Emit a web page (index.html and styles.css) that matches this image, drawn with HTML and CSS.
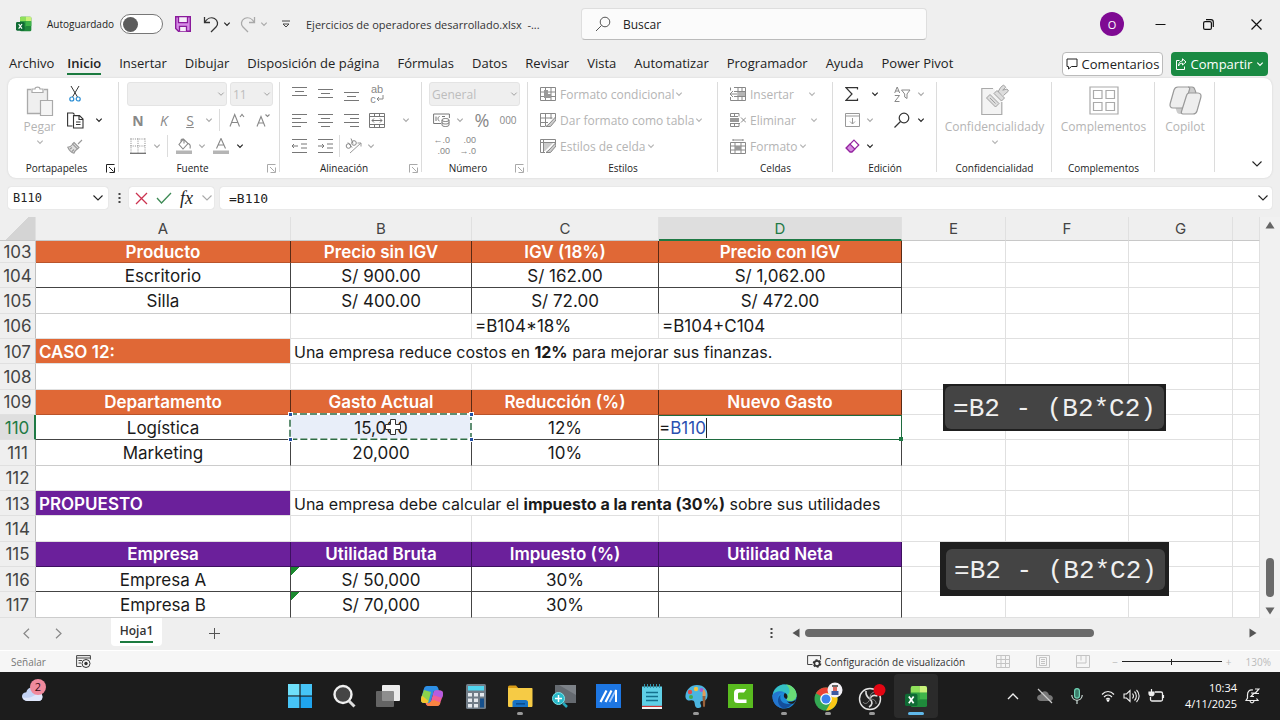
FILE: index.html
```html
<!DOCTYPE html>
<html lang="es">
<head>
<meta charset="utf-8">
<title>Ejercicios de operadores desarrollado.xlsx - Excel</title>
<meta name="viewport" content="width=device-width, initial-scale=1">
<link rel="stylesheet" href="styles.css">
</head>
<body>
<svg class="defs" aria-hidden="true">
  <symbol id="chev" viewBox="0 0 8 8"><path d="M1.3 2.6 4 5.3 6.7 2.6" fill="none" stroke="currentColor" stroke-width="1.2"/></symbol>
  <symbol id="chevl" viewBox="0 0 12 12"><path d="M1.5 3.500 6 8l4.500-4.500" fill="none" stroke="currentColor" stroke-width="1.100"/></symbol>
  <symbol id="launch" viewBox="0 0 9 9"><path d="M.5 8.500V.5H8.500M3 3l4.500 4.500M8.500 3.500v5H3.500" fill="none" stroke="currentColor"/></symbol>
  <symbol id="xl" viewBox="0 0 24 24"><path d="M8 1h13a2 2 0 0 1 2 2v18a2 2 0 0 1-2 2H8a2 2 0 0 1-2-2V3a2 2 0 0 1 2-2z" fill="#1f8a3b"/><path d="M6 8V3a2 2 0 0 1 2-2h7v7z" fill="#8fe05a"/><path d="M15 1h6a2 2 0 0 1 2 2v5h-8z" fill="#c9f27a"/><path d="M15 8h8v7h-8z" fill="#3fb54a"/><path d="M6 8h9v8H6z" fill="#2ea043"/><rect y="9" width="13" height="13" rx="2" fill="#0f6b34"/><path d="m4 12 5 7M9 12l-5 7" stroke="#fff" stroke-width="1.800"/></symbol>
</svg>

<header class="titlebar">
  <svg class="logo"><use href="#xl"/></svg>
  <label class="autosave">Autoguardado <input type="checkbox" role="switch" class="switch"></label>
  <button class="tb save" aria-label="Guardar"><svg width="16" height="16" viewBox="0 0 16 16"><path d="M.7.7h14.600v14.600H3.500L.7 12.500z" fill="#d58be6" stroke="#8a1a9b" stroke-width="1.400"/><path d="M3.500.7h9v6h-9zM4.500 15.300v-5h7v5" fill="#f5eef8" stroke="#8a1a9b" stroke-width="1.300"/></svg></button>
  <button class="tb undo" aria-label="Deshacer"><svg width="16" height="17" viewBox="0 0 16 17"><path d="M1.500 1v5.500H7M1.700 6.300C4 2.500 8 .8 11.500 2.500c3.500 2 4 6 1.500 8.500L8 16" fill="none" stroke="#333" stroke-width="1.300"/></svg></button>
  <button class="tb arrow" aria-label="Opciones de deshacer"><svg class="chev"><use href="#chev"/></svg></button>
  <button class="tb redo off" aria-label="Rehacer"><svg width="16" height="17" viewBox="0 0 16 17"><path d="M14.500 1v5.500H9M14.300 6.300C12 2.500 8 .8 4.500 2.500c-3.500 2-4 6-1.500 8.500L8 16" fill="none" stroke="#a9a9a9" stroke-width="1.300"/></svg></button>
  <button class="tb arrow off" aria-label="Opciones de rehacer"><svg class="chev"><use href="#chev"/></svg></button>
  <button class="tb custom" aria-label="Personalizar barra"><svg width="8" height="8" viewBox="0 0 8 8"><path d="M0 1h8M1 4l3 3 3-3z" fill="none" stroke="#444"/></svg></button>
  <span class="doc">Ejercicios de operadores desarrollado.xlsx &nbsp;-...</span>
  <label class="search"><svg width="16" height="16" viewBox="0 0 16 16"><circle cx="10" cy="6" r="4.800" fill="none" stroke="#555"/><path d="m6.500 9.500-5.500 5.500" stroke="#555"/></svg><input type="text" placeholder="Buscar" aria-label="Buscar"></label>
  <div class="winbtns">
    <button class="avatar" aria-label="Cuenta">O</button>
    <button aria-label="Minimizar"><svg width="11" height="11" viewBox="0 0 11 11"><path d="M.5 5.500h10" stroke="#111"/></svg></button>
    <button aria-label="Restaurar"><svg width="11" height="11" viewBox="0 0 11 11"><rect x=".6" y="2.600" width="7.800" height="7.800" rx="1.500" fill="none" stroke="#111" stroke-width="1.200"/><path d="M3 .7h5a2.300 2.300 0 0 1 2.300 2.300v5" fill="none" stroke="#111" stroke-width="1.200"/></svg></button>
    <button aria-label="Cerrar"><svg width="11" height="11" viewBox="0 0 11 11"><path d="m.5.5 10 10m0-10-10 10" stroke="#111" stroke-width="1.200"/></svg></button>
  </div>
</header>

<nav class="tabs">
  <button>Archivo</button><button class="on">Inicio</button><button>Insertar</button><button>Dibujar</button><button>Disposición de página</button><button>Fórmulas</button><button>Datos</button><button>Revisar</button><button>Vista</button><button>Automatizar</button><button>Programador</button><button>Ayuda</button><button>Power Pivot</button>
  <div class="share-area">
    <button class="comments"><svg width="12" height="12" viewBox="0 0 12 12"><path d="M1 1h10v7.500H5.500L2.500 11V8.500H1z" fill="none" stroke="#222"/></svg>Comentarios</button>
    <button class="share"><svg width="12" height="12" viewBox="0 0 12 12"><path d="M4.500 2.500h-3v9h8V8.500M7.500.8 11 4 7.500 7V5.200C5.500 5.200 4.300 6 3.500 8c.2-3.200 1.500-4.900 4-5.100z" fill="none" stroke="#fff"/></svg>Compartir<svg class="chev"><use href="#chev"/></svg></button>
  </div>
</nav>

<section class="ribbon">
  <div class="group">
    <div class="body clip">
      <button class="big off"><svg width="28" height="30" viewBox="0 0 28 30"><path d="M1.500 3.500h20v11H14v13H1.500z" fill="#efefef"/><path d="M5 3.500H1.500v24H14M18 3.500h3.500v11" fill="none" stroke="#aaa" stroke-width="1.300"/><path d="M6 6.500V3h3c0-2.500 5-2.500 5 0h3v3.500z" fill="#fff" stroke="#aaa" stroke-width="1.200"/><path d="M14.500 14.500h12v15h-12z" fill="#f5f5f5" stroke="#aaa" stroke-width="1.200"/></svg><span>Pegar</span><svg class="chev"><use href="#chev"/></svg></button>
      <div class="lines">
        <div class="line"><button class="ic" aria-label="Cortar"><svg width="12" height="16" viewBox="0 0 12 16"><path d="m2 0 6.500 11M10 0 3.500 11" stroke="#333" fill="none"/><circle cx="2.800" cy="13" r="2" fill="none" stroke="#2a8dd4" stroke-width="1.200"/><circle cx="9.200" cy="13" r="2" fill="none" stroke="#2a8dd4" stroke-width="1.200"/></svg></button></div>
        <div class="line"><button class="ic" aria-label="Copiar"><svg width="17" height="17" viewBox="0 0 17 17"><path d="M5.500 14H.6V1H6l1.500 1.500M6.500 3.600h6L16 7v9H6.500zM12 3.600V7.500h4M9 10h4.500M9 12.500h4.500" fill="none" stroke="#333" stroke-width="1.100"/></svg></button><button class="ar gap" aria-label="Más"><svg class="chev"><use href="#chev"/></svg></button></div>
        <div class="line"><button class="ic off" aria-label="Copiar formato"><svg width="16" height="15" viewBox="0 0 16 15"><path d="m15 1-4 4M7 3.500l5 5-1.500 1.500-5-5zM5.500 5.500C4 7.500 2.500 8 .8 8.200 2 11 4.500 13.500 7 14.200c.5-1.500 1.500-3 3.200-4.200M3 10l2-1.500M5 12.500l2-2" fill="#e0e0e0" stroke="#999" stroke-width="1.100"/></svg></button></div>
      </div>
    </div>
    <div class="label"><span>Portapapeles</span><svg class="launch"><use href="#launch"/></svg></div>
  </div>

  <div class="group">
    <div class="body lines">
      <div class="line sel"><select disabled class="font" aria-label="Fuente"><option></option></select><select disabled class="size" aria-label="Tamaño"><option>11</option></select></div>
      <div class="line off"><button class="ic bold">N</button><button class="ic ital">K</button><button class="ic under">S</button><button class="ar" aria-label="Más"><svg class="chev"><use href="#chev"/></svg></button><i class="sep"></i><button class="ic" aria-label="Aumentar"><svg width="16" height="14" viewBox="0 0 16 14"><path d="M1 13.500 5.700 1.500 10.500 13.500M2.500 9.500h6.500M11 4l2-2.500L15 4" fill="none" stroke="#888" stroke-width="1.100"/></svg></button><button class="ic" aria-label="Reducir"><svg width="14" height="14" viewBox="0 0 14 14"><path d="M1 13.500 5 3.500l4 10M2.500 10h5M9.500 1.500l2 2 2-2" fill="none" stroke="#888" stroke-width="1.100"/></svg></button></div>
      <div class="line off"><button class="ic" aria-label="Bordes"><svg width="16" height="16" viewBox="0 0 16 16"><path d="M.5 1h15M.5 8h15M1 .5v14M8 .5v14M15 .5v14" stroke="#888" stroke-dasharray="1 1.200"/><path d="M0 15.300h16" stroke="#666" stroke-width="1.200"/></svg></button><button class="ar" aria-label="Más"><svg class="chev"><use href="#chev"/></svg></button><i class="sep"></i><button class="ic fill" aria-label="Color de relleno"><svg width="16" height="16" viewBox="0 0 16 16"><path d="M7.500 1 3 6.500l4 4.500 5-5.500zM5 4.300V2.500C5 .5 8 .5 8 2.500v3M12.500 5.500c2 1 2 3 1.500 5" fill="none" stroke="#888" stroke-width="1.100"/><path d="M0 12.500h16v3.500H0z" fill="#b5b5b5"/></svg></button><button class="ar" aria-label="Más"><svg class="chev"><use href="#chev"/></svg></button><button class="ic" aria-label="Color de fuente"><svg width="16" height="16" viewBox="0 0 16 16"><path d="M3.500 10.500 8 .5l4.500 10M5.200 7h5.600" fill="none" stroke="#888" stroke-width="1.100"/><path d="M0 12.500h16v3.500H0z" fill="#b5b5b5"/></svg></button><button class="ar dark" aria-label="Más"><svg class="chev"><use href="#chev"/></svg></button></div>
    </div>
    <div class="label"><span>Fuente</span><svg class="launch off"><use href="#launch"/></svg></div>
  </div>

  <div class="group">
    <div class="body lines off">
      <div class="line"><button class="ic" aria-label="Arriba"><svg width="15" height="16" viewBox="0 0 15 16"><path d="M0 1.500h15M3 5.500h9M0 9.500h15" stroke="#777"/></svg></button><button class="ic" aria-label="Medio"><svg width="15" height="16" viewBox="0 0 15 16"><path d="M0 3.500h15M3 7.500h9M0 11.500h15" stroke="#777"/></svg></button><button class="ic" aria-label="Abajo"><svg width="15" height="16" viewBox="0 0 15 16"><path d="M0 6.500h15M3 10.500h9M0 14.500h15" stroke="#777"/></svg></button><button class="ic wrap" aria-label="Ajustar texto"><span>ab</span><span>c<svg width="8" height="8" viewBox="0 0 8 8"><path d="M7 1v4H1M3 3 1 5l2 2" fill="none" stroke="#888"/></svg></span></button></div>
      <div class="line"><button class="ic" aria-label="Izquierda"><svg width="15" height="14" viewBox="0 0 15 14"><path d="M0 1.500h15M0 5.500h9M0 9.500h15M0 13.500h9" stroke="#777"/></svg></button><button class="ic" aria-label="Centro"><svg width="15" height="14" viewBox="0 0 15 14"><path d="M0 1.500h15M3 5.500h9M0 9.500h15M3 13.500h9" stroke="#777"/></svg></button><button class="ic" aria-label="Derecha"><svg width="15" height="14" viewBox="0 0 15 14"><path d="M0 1.500h15M6 5.500h9M0 9.500h15M6 13.500h9" stroke="#777"/></svg></button><button class="ic" aria-label="Combinar"><svg width="16" height="15" viewBox="0 0 16 15"><path d="M.5.5h15v14H.5zM.5 3.500h15M.5 11.500h15M5.500.5v3M10.500.5v3M5.500 11.500v3M10.500 11.500v3M3 7.500h10M5 5.500l-2 2 2 2M11 5.500l2 2-2 2" fill="none" stroke="#777"/></svg></button><button class="ar gap2" aria-label="Más"><svg class="chev"><use href="#chev"/></svg></button></div>
      <div class="line"><button class="ic" aria-label="Disminuir sangría"><svg width="15" height="14" viewBox="0 0 15 14"><path d="M0 .5h15M9 5h6M9 9h6M0 13.500h15M0 7h6M2 5 0 7l2 2" fill="none" stroke="#777"/></svg></button><button class="ic" aria-label="Aumentar sangría"><svg width="15" height="14" viewBox="0 0 15 14"><path d="M0 .5h15M9 5h6M9 9h6M0 13.500h15M0 7h6M4 5l2 2-2 2" fill="none" stroke="#777"/></svg></button><i class="sep thin"></i><button class="ic fill" aria-label="Orientación"><svg width="17" height="16" viewBox="0 0 17 16"><path d="m5 15 11-10M12.500 5H16v3.500" fill="none" stroke="#999"/><circle cx="3.500" cy="8" r="2.300" fill="none" stroke="#888"/><circle cx="9" cy="5" r="2.300" fill="none" stroke="#888"/><path d="m3 4.500 4 5M6 .5l2 5" stroke="#888"/></svg></button><button class="ar" aria-label="Más"><svg class="chev"><use href="#chev"/></svg></button></div>
    </div>
    <div class="label"><span>Alineación</span><svg class="launch off"><use href="#launch"/></svg></div>
  </div>

  <div class="group">
    <div class="body lines off num">
      <div class="line sel"><select disabled class="gen" aria-label="Formato de número"><option>General</option></select></div>
      <div class="line"><button class="ic" aria-label="Moneda"><svg width="17" height="14" viewBox="0 0 17 14"><path d="M8 10.500H.6V1h15.800v4M3 3.500v4.500M6.500 3.500c-2 0-2 4.500 0 4.500M9 3.500h3" fill="none" stroke="#777"/><path d="M9 7v5c0 2 7 2 7 0V7c0-2-7-2-7 0zm0 0c0 2 7 2 7 0M9 9.500c0 2 7 2 7 0" fill="#fff" stroke="#777"/></svg></button><button class="ar" aria-label="Más"><svg class="chev"><use href="#chev"/></svg></button><button class="ic pct">%</button><button class="ic th">000</button></div>
      <div class="line"><button class="ic dec" aria-label="Aumentar decimales"><span>←.0</span><span>.00</span></button><button class="ic dec" aria-label="Disminuir decimales"><span>.00</span><span>→.0</span></button></div>
    </div>
    <div class="label"><span>Número</span><svg class="launch off"><use href="#launch"/></svg></div>
  </div>

  <div class="group">
    <div class="body lines off txt">
      <button class="line"><svg width="16" height="14" viewBox="0 0 16 14"><path d="M.5.5h15v13H.5zM.5 5h15M.5 9.500h15M5.500.5v13M11 .5v13" fill="none" stroke="#888"/><path d="M4 3h4v4h3v4H4z" fill="#999"/></svg><span>Formato condicional</span><svg class="chev"><use href="#chev"/></svg></button>
      <button class="line"><svg width="16" height="14" viewBox="0 0 16 14"><path d="M5 13.500H.5V.5h15v5M.5 5h12M.5 9.500H8M5.500.5v13M11 .5V6" fill="none" stroke="#888"/><path d="M15.500 4 9 11l-3 2.500h4.500L16 7z" fill="#ccc" stroke="#888"/></svg><span>Dar formato como tabla</span><svg class="chev"><use href="#chev"/></svg></button>
      <button class="line"><svg width="16" height="14" viewBox="0 0 16 14"><path d="M5 13.500H.5V.5h15v5M.5 3.500h15M3.500.5v13" fill="none" stroke="#888"/><path d="M4 4h9l-8 8H4z" fill="#ccc"/><path d="M15.500 4 9 11l-3 2.500h4.500L16 7z" fill="#ccc" stroke="#888"/></svg><span>Estilos de celda</span><svg class="chev"><use href="#chev"/></svg></button>
    </div>
    <div class="label"><span>Estilos</span></div>
  </div>

  <div class="group">
    <div class="body lines off txt">
      <button class="line"><svg width="16" height="14" viewBox="0 0 16 14"><path d="M4 .5h11.500v13H4M.5.5v3M.5 10v3.500H4M8 .5v13M12 .5v13M4 4.500h11.500M4 9.500h11.500M0 7h7M3 4 0 7l3 3" fill="none" stroke="#888"/><path d="M8 5h7v4H8z" fill="#b5b5b5"/></svg><span>Insertar</span><svg class="chev far"><use href="#chev"/></svg></button>
      <button class="line"><svg width="16" height="14" viewBox="0 0 16 14"><path d="M.5.5H9v3M.5 13.500H9v-3M4.500.5v3M4.500 10v3.500M0 3.500h8M0 10.500h10M.5.5v3M.5 10v3.500" fill="none" stroke="#888"/><path d="M0 5h9v4H0z" fill="#999"/><path d="m11 4.500 5 5m0-5-5 5" stroke="#888"/></svg><span>Eliminar</span><svg class="chev far"><use href="#chev"/></svg></button>
      <button class="line"><svg width="16" height="15" viewBox="0 0 16 15"><path d="M.5 3.500h15v11H.5zM.5 7h15M.5 11h15M5 3.500v11M11 3.500v11M3 0v2M13 0v2M3 1h10" fill="none" stroke="#888"/><path d="M5 7h6v4H5z" fill="#999"/></svg><span>Formato</span><svg class="chev"><use href="#chev"/></svg></button>
    </div>
    <div class="label"><span>Celdas</span></div>
  </div>

  <div class="group">
    <div class="body lines edit">
      <div class="line"><button class="ic" aria-label="Autosuma"><svg width="14" height="14" viewBox="0 0 14 14"><path d="M12.500 2.500V.7H1l6 6.300-6 6.300h11.500v-1.800" fill="none" stroke="#333" stroke-width="1.200"/></svg></button><button class="ar wide" aria-label="Más"><svg class="chev"><use href="#chev"/></svg></button><button class="ic off" aria-label="Ordenar y filtrar"><svg width="17" height="16" viewBox="0 0 17 16"><path d="m.7 7 2.500-6 2.500 6M1.500 5h3.500M.8 9.500h4.700l-4.700 6h4.700M7.500 4h8.500l-3 4v4.500l-2.300-1.500V8z" fill="none" stroke="#888"/></svg></button><button class="ar off" aria-label="Más"><svg class="chev"><use href="#chev"/></svg></button></div>
      <div class="line"><button class="ic off" aria-label="Rellenar"><svg width="15" height="14" viewBox="0 0 15 14"><path d="M.5.5h14v13H.5zM.5 3h14M7.500 5v6M5 8.500 7.500 11 10 8.500" fill="none" stroke="#999"/></svg></button><button class="ar off wide2" aria-label="Más"><svg class="chev"><use href="#chev"/></svg></button><button class="ic" aria-label="Buscar y seleccionar"><svg width="16" height="16" viewBox="0 0 16 16"><circle cx="10" cy="6" r="4.800" fill="none" stroke="#333" stroke-width="1.200"/><path d="m6.500 9.500-6 6" stroke="#333" stroke-width="1.200"/></svg></button><button class="ar" aria-label="Más"><svg class="chev"><use href="#chev"/></svg></button></div>
      <div class="line"><button class="ic" aria-label="Borrar"><svg width="15" height="14" viewBox="0 0 15 14"><path d="M9 1.200 13.800 6 7 12.800H5L1.200 9z" fill="#fff" stroke="#93239f" stroke-width="1.200"/><path d="M5 5.200 9.800 10 7 12.800H5L1.200 9z" fill="#d68be0" stroke="#93239f" stroke-width="1.200"/></svg></button><button class="ar wide2" aria-label="Más"><svg class="chev"><use href="#chev"/></svg></button></div>
    </div>
    <div class="label"><span>Edición</span></div>
  </div>

  <div class="group">
    <div class="body"><button class="big off"><svg width="28" height="32" viewBox="0 0 28 32"><path d="M.8 4.500h12l8 12v14H.8z" fill="#f3f3f3"/><path d="M12 4.500H.8v26h20V18" fill="none" stroke="#aaa" stroke-width="1.200"/><path d="m5.500 14 3.500-3.500 9 9-3.500 3.500zM9 14l5.500 5.500M13 9.500l3-3 7.500 7.500-3 3zM17 8l2.500-4.500 3-2.500 2.200 2.200-3 3L26 5l1.500 2-5 4.500" fill="#ddd" stroke="#a0a0a0"/></svg><span>Confidencialidady</span><svg class="chev"><use href="#chev"/></svg></button></div>
    <div class="label"><span>Confidencialidad</span></div>
  </div>
  <div class="group">
    <div class="body"><button class="big off"><svg width="30" height="32" viewBox="0 0 30 32"><path d="M1 3h28v27H1zM4.500 6.500h8.500v8H4.500zM17 6.500h8.500v8H17zM4.500 18.500h8.500v8H4.500zM17 18.500h8.500v8H17z" fill="none" stroke="#aaa" stroke-width="1.200"/></svg><span>Complementos</span></button></div>
    <div class="label"><span>Complementos</span></div>
  </div>
  <div class="group">
    <div class="body"><button class="big off"><svg width="33" height="32" viewBox="0 0 33 32"><path d="M8 3h14c2 0 3 1 3.500 3l1 3h-7z" fill="#ccc"/><path d="M25 30H11c-2 0-3-1-3.500-3l-1-3h7z" fill="#ccc"/><path d="M9 3h10c1.500 0 2 1 1.500 2.500l-5 16C15 23.500 14 24 12.500 24H4c-2.500 0-3.500-2-2.800-4.500L5 6c.6-2 2-3 4-3z" fill="#eee" stroke="#999" stroke-width="1.200"/><path d="M24 30H14c-1.500 0-2-1-1.500-2.500l5-16C18 9.500 19 9 20.500 9H29c2.500 0 3.500 2 2.800 4.500L28 27c-.6 2-2 3-4 3z" fill="#eee" stroke="#999" stroke-width="1.200"/><path d="M19 3h4c1.500 0 2.500 1 3 3l1 3" fill="none" stroke="#999" stroke-width="1.200"/></svg><span>Copilot</span></button></div>
  </div>
  <button class="collapse" aria-label="Contraer"><svg class="chevl"><use href="#chevl"/></svg></button>
</section>

<section class="fbar">
  <div class="box name"><input type="text" value="B110" aria-label="Cuadro de nombres"><svg class="chevl"><use href="#chevl"/></svg></div>
  <svg class="dots" width="3" height="12" viewBox="0 0 3 12"><path d="M.5 1h2v2h-2zM.5 5h2v2h-2zM.5 9h2v2h-2z" fill="#444"/></svg>
  <div class="box fx">
    <button aria-label="Cancelar"><svg width="13" height="13" viewBox="0 0 13 13"><path d="m1 1 11 11M12 1 1 12" stroke="#cc3350" stroke-width="1.300"/></svg></button>
    <button aria-label="Introducir"><svg width="16" height="12" viewBox="0 0 16 12"><path d="m1 6 4.500 5L15 1" fill="none" stroke="#3d8a55" stroke-width="1.300"/></svg></button>
    <button class="func" aria-label="Insertar función">fx</button>
    <svg class="chevl off"><use href="#chevl"/></svg>
  </div>
  <div class="box formula"><input type="text" value="=B110" aria-label="Barra de fórmulas"><svg class="chevl"><use href="#chevl"/></svg></div>
</section>

<main class="sheet">
  <table>
    <colgroup><col class="col-rh"><col class="col-a"><col class="col-b"><col class="col-c"><col class="col-d"><col class="col-e"><col class="col-f"><col class="col-g"><col></colgroup>
    <thead><tr><th class="corner"></th><th>A</th><th>B</th><th>C</th><th class="cur">D</th><th>E</th><th>F</th><th>G</th><th></th></tr></thead>
    <tbody>
      <tr class="cut orange"><th>103</th><td>Producto</td><td>Precio sin IGV</td><td>IGV (18%)</td><td>Precio con IGV</td><td></td><td></td><td></td><td></td></tr>
      <tr class="data"><th>104</th><td>Escritorio</td><td>S/ 900.00</td><td>S/ 162.00</td><td>S/ 1,062.00</td><td></td><td></td><td></td><td></td></tr>
      <tr class="data last"><th>105</th><td>Silla</td><td>S/ 400.00</td><td>S/ 72.00</td><td>S/ 472.00</td><td></td><td></td><td></td><td></td></tr>
      <tr class="left"><th>106</th><td></td><td></td><td>=B104*18%</td><td>=B104+C104</td><td></td><td></td><td></td><td></td></tr>
      <tr class="left"><th>107</th><td class="tag case">CASO 12:</td><td class="note" colspan="3">Una empresa reduce costos en <b>12%</b> para mejorar sus finanzas.</td><td></td><td></td><td></td><td></td></tr>
      <tr><th>108</th><td></td><td></td><td></td><td></td><td></td><td></td><td></td><td></td></tr>
      <tr class="orange"><th>109</th><td>Departamento</td><td>Gasto Actual</td><td>Reducción (%)</td><td>Nuevo Gasto</td><td></td><td></td><td></td><td></td></tr>
      <tr class="data"><th class="cur">110</th><td>Logística</td><td class="picked">15,000<svg class="marquee" aria-hidden="true"><rect width="100%" height="100%" fill="none" stroke="#fff" stroke-width="2"/><rect width="100%" height="100%" fill="none" stroke="#2c6b45" stroke-width="1.500" stroke-dasharray="7 3"/></svg><i class="h tl"></i><i class="h tr"></i><i class="h bl"></i><i class="h br"></i><svg class="cursor" width="18" height="18" viewBox="0 0 18 18" aria-hidden="true"><path d="M6.500 1.500h5v5h5v5h-5v5h-5v-5h-5v-5h5z" fill="#fff" stroke="#333"/></svg></td><td>12%</td><td class="editing">=<span>B110</span><i class="knob"></i></td><td></td><td></td><td></td><td></td></tr>
      <tr class="data last"><th>111</th><td>Marketing</td><td>20,000</td><td>10%</td><td></td><td></td><td></td><td></td><td></td></tr>
      <tr><th>112</th><td></td><td></td><td></td><td></td><td></td><td></td><td></td><td></td></tr>
      <tr class="left"><th>113</th><td class="tag task">PROPUESTO</td><td class="note" colspan="3">Una empresa debe calcular el <b>impuesto a la renta (30%)</b> sobre sus utilidades</td><td></td><td></td><td></td><td></td></tr>
      <tr><th>114</th><td></td><td></td><td></td><td></td><td></td><td></td><td></td><td></td></tr>
      <tr class="purple"><th>115</th><td>Empresa</td><td>Utilidad Bruta</td><td>Impuesto (%)</td><td>Utilidad Neta</td><td></td><td></td><td></td><td></td></tr>
      <tr class="data"><th>116</th><td>Empresa A</td><td class="warn">S/ 50,000</td><td>30%</td><td></td><td></td><td></td><td></td><td></td></tr>
      <tr class="data last"><th>117</th><td>Empresa B</td><td class="warn">S/ 70,000</td><td>30%</td><td></td><td></td><td></td><td></td><td></td></tr>
    </tbody>
  </table>
  <div class="vscroll"><svg width="10" height="8" viewBox="0 0 10 8"><path d="M5 .5 9.500 7.500H.5z" fill="#666"/></svg><i></i><svg width="10" height="8" viewBox="0 0 10 8"><path d="M5 7.500.5.5h9z" fill="#666"/></svg></div>
  <div class="snip one"><code>=B2 - (B2*C2)</code></div>
  <div class="snip two"><code>=B2 - (B2*C2)</code></div>
</main>

<div class="sheetbar">
  <button aria-label="Anterior"><svg width="7" height="11" viewBox="0 0 7 11"><path d="M6 .8 1 5.500l5 4.700" fill="none" stroke="#888" stroke-width="1.200"/></svg></button>
  <button aria-label="Siguiente"><svg width="7" height="11" viewBox="0 0 7 11"><path d="m1 .8 5 4.700-5 4.700" fill="none" stroke="#888" stroke-width="1.200"/></svg></button>
  <button class="tab"><span>Hoja1</span></button>
  <button class="add" aria-label="Nueva hoja"><svg width="11" height="11" viewBox="0 0 11 11"><path d="M5.500 0v11M0 5.500h11" stroke="#555"/></svg></button>
  <div class="hscroll"><svg width="3" height="12" viewBox="0 0 3 12"><path d="M.5 1h2v2h-2zM.5 5h2v2h-2zM.5 9h2v2h-2z" fill="#444"/></svg><svg class="la" width="8" height="10" viewBox="0 0 8 10"><path d="M.5 5 7.500.5v9z" fill="#555"/></svg><div class="track"><i></i></div><svg width="8" height="10" viewBox="0 0 8 10"><path d="M7.500 5 .5.5v9z" fill="#555"/></svg></div>
</div>

<div class="status">
  <span class="mode">Señalar</span>
  <svg class="rec" width="15" height="13" viewBox="0 0 15 13"><path d="M5.500 11.500H.6V.6h13.800v4M.6 3h13.800M2.500 5.500H6M2.500 8H5" fill="none" stroke="#444"/><circle cx="10" cy="8.500" r="4" fill="#f6f6f6" stroke="#333"/><circle cx="10" cy="8.500" r="1.700" fill="#333"/></svg>
  <button class="view"><svg width="15" height="13" viewBox="0 0 15 13"><path d="M5.500 9.500H.6V.6h13v4" fill="none" stroke="#444"/><circle cx="10" cy="8.500" r="2.600" fill="none" stroke="#333" stroke-width="1.600"/><circle cx="10" cy="8.500" r="3.700" fill="none" stroke="#333" stroke-width="1.200" stroke-dasharray="2 1.870"/></svg>Configuración de visualización</button>
  <button class="v" aria-label="Normal"><svg width="14" height="13" viewBox="0 0 14 13"><path d="M.5.5h13v12H.5zM.5 4.500h13M.5 8.500h13M5 .5v12M9.500.5v12" fill="none" stroke="#c4c4c4"/></svg></button>
  <button class="v" aria-label="Diseño de página"><svg width="14" height="13" viewBox="0 0 14 13"><path d="M.5.5h13v12H.5zM3.500 2.500h7v8h-7zM5 4.500h4M5 6.500h4M5 8.500h4" fill="none" stroke="#c4c4c4"/></svg></button>
  <button class="v" aria-label="Salto de página"><svg width="14" height="13" viewBox="0 0 14 13"><path d="M.5.5h13v12H.5zM.5 8h9.500V.5M5 .5v5" fill="none" stroke="#c4c4c4"/></svg></button>
  <div class="zoom"><span>−</span><input type="range" min="10" max="400" value="205" disabled aria-label="Zoom"><span>+</span></div>
  <span class="pctz">130%</span>
</div>

<footer class="taskbar">
  <button class="weather" aria-label="El tiempo"><svg width="27" height="24" viewBox="0 0 30 26"><path d="M8 24C1 24 0 15 7 14.500 8 8 17 7 19 14c7-.5 8 9.500 2 10z" fill="#c3d3f5"/><path d="M8 24c-3 0-5-2-5-4 6 2 14-1 16-6 7-.5 8 9.500 2 10z" fill="#dfe7fb"/></svg><span>2</span></button>
  <div class="apps">
    <button aria-label="Inicio"><svg width="24" height="24" viewBox="0 0 24 24"><path d="M0 0h11.400v11.400H0z" fill="#6fe0fa"/><path d="M12.600 0H24v11.400H12.600zM0 12.600h11.400V24H0z" fill="#46c4f7"/><path d="M12.600 12.600H24V24H12.600z" fill="#1fa4ee"/></svg></button>
    <button aria-label="Buscar"><svg width="24" height="24" viewBox="0 0 24 24"><circle cx="11" cy="10.500" r="8.500" fill="#454545" stroke="#f0f0f0" stroke-width="2.400"/><path d="m17 17 5.500 5.500" stroke="#ddd" stroke-width="3"/></svg></button>
    <button aria-label="Vista de tareas"><svg width="26" height="24" viewBox="0 0 26 24"><rect x="7" y="1" width="18" height="16" rx="1" fill="#ececec"/><rect x="1" y="7" width="18" height="16" rx="1" fill="#777" opacity=".8"/></svg></button>
    <button aria-label="Copilot"><svg width="24" height="24" viewBox="0 0 24 24"><path d="M7 2h9c1 0 2 1 2.500 3l.5 2h-5l-3 10c-.5 1.500-1 2-2.500 2H4c-3 0-3.500-3-2.500-6l2.300-8C4.300 3 5.500 2 7 2z" fill="#2d8fe5"/><path d="M4 6 11 8 8.500 17.500c-.3 1-1 1.500-2 1.500H4c-3 0-3.500-3-2.500-6z" fill="#8bd34c"/><path d="M2 11.500 8.500 17C8 18.500 7.500 19 6.500 19H4c-3 0-3.500-3-2.500-6z" fill="#f5c52e"/><path d="M17 22H9c-2 0-3-1-3.500-3h3.500c1 0 1.700-.6 2-2l2.500-8.500c.4-1.300 1-2 2.500-2h4c3 0 3.500 3 2.500 6L20.200 19c-.5 2-1.700 3-3.200 3z" fill="#ef5f97"/><path d="M14 7.500c.4-.7 1-1 2-1h4c3 0 3.500 3 2.500 6L22 14l-9-3z" fill="#b65be0"/><path d="M6 19.500C9 20 12 16 14 16l6.500 2.500C20 21 18.500 22 17 22H9c-1.500 0-2.500-.8-3-2.500z" fill="#f98442"/></svg></button>
    <button aria-label="Calculadora"><svg width="20" height="25" viewBox="0 0 20 25"><rect width="20" height="25" rx="1.500" fill="#717d88"/><path d="M2 2h16v4.500H2z" fill="#50d5ef"/><path d="M2 9h4v3.500H2zM8 9h4v3.500H8zM14 9h4v3.500h-4zM2 14.500h4V18H2zM8 14.500h4V18H8zM2 20h4v3.500H2zM8 20h4v3.500H8z" fill="#e4e9ee"/><path d="M14 14.500h4v9h-4z" fill="#15508d"/></svg></button>
    <button class="run" aria-label="Explorador"><svg width="26" height="24" viewBox="0 0 26 24"><path d="M1 3a1.500 1.500 0 0 1 1.500-1.500H9L12 5H1z" fill="#d99c16"/><path d="M1 4h23.500c.8 0 1 .5 1 1v16.500c0 1-.5 1.500-1.500 1.500H2.500C1.500 23 1 22.500 1 21.500z" fill="#f6cb45"/><path d="M5.500 23v-4.500c0-1.500.8-2.500 2.500-2.500h10.500c1.700 0 2.500 1 2.500 2.500V23z" fill="#1772c4"/><path d="M9 19h9v1.600H9z" fill="#0a4d8f"/></svg></button>
    <button aria-label="Lupa"><svg width="26" height="24" viewBox="0 0 26 24"><path d="M4 1h21v18H4z" fill="#656a70"/><path d="M8 1h17v10z" fill="#7d8288"/><circle cx="7.500" cy="14.500" r="6" fill="#29b9c9" stroke="#7de3ea"/><path d="M7.500 11v7M4 14.500h7" stroke="#fff" stroke-width="1.500"/><path d="m12 19 4 4" stroke="#27a8bb" stroke-width="2.500"/></svg></button>
    <button aria-label="MyASUS"><svg width="25" height="24" viewBox="0 0 25 24"><path d="M0 0h25v24H0z" fill="#1d76e2"/><path d="m4.500 18 6-11.500M9.500 18l6-11.500" stroke="#fff" stroke-width="2.200"/><path d="m13.500 18 6.500-12v12" fill="none" stroke="#9dc8ff" stroke-width="1.800"/><path d="M20 6v12" stroke="#fff" stroke-width="2"/></svg></button>
    <button aria-label="Bloc de notas"><svg width="20" height="25" viewBox="0 0 20 25"><path d="M0 2.500h20V22H0z" fill="#5fcfe6"/><path d="M0 22h20v3H0z" fill="#f4f4f4"/><path d="M0 21.800h20v1.200H0z" fill="#c33"/><path d="M4 8.500h12M4 12.500h12M4 16.500h12" stroke="#13708e" stroke-width="1.500"/><path d="M2.500 0v4M5.500 0v4M8.500 0v4M11.500 0v4M14.500 0v4M17.500 0v4" stroke="#2f94ac"/></svg></button>
    <button class="run" aria-label="Paint"><svg width="25" height="25" viewBox="0 0 25 25"><path d="M13 1c7 0 10.500 4.500 10.500 10 0 4-2 6-5 6-2 0-3 1.500-1.500 4 1 2-1 3.500-3.500 3-2.500-.4-2.500-3-3-5.500-.4-2-2-2.500-4.500-2S1 15 1.500 11.500C2 6 6.500 1 13 1z" fill="#4bb5e0"/><circle cx="12" cy="5" r="2.200" fill="#f3c33f"/><circle cx="6" cy="8" r="2.200" fill="#e04d4d"/><circle cx="17.500" cy="6" r="2" fill="#a55bd0"/><circle cx="7" cy="13" r="2" fill="#46a94d"/><path d="M19.500 5c2 2 2.500 4 2 7h-3c0-3 0-5 1-7z" fill="#e39b58"/><path d="M18.500 12h3l-.5 10c-.3 1.500-1.700 1.500-2 0z" fill="#98613a"/></svg></button>
    <button aria-label="Camtasia"><svg width="25" height="24" viewBox="0 0 25 24"><path d="M0 0h25v24H0z" fill="#59bb1f"/><path d="M18.500 5H10a4 4 0 0 0-4 4v6.500a3.500 3.500 0 0 0 3.500 3.500h9v-3.500h-7c-1 0-1.500-.5-1.500-1.500V10c0-1 .7-1.500 1.500-1.500h4.500z" fill="#fff"/></svg></button>
    <button class="run" aria-label="Edge"><svg width="25" height="25" viewBox="0 0 25 25"><circle cx="12.500" cy="12.500" r="12" fill="#1e8ad8"/><path d="M1 10C3 3 8 .5 12.500.5c7 0 12 5 12 10.500 0 4-3 6-6 6-2.500 0-4-1-4-2 1.500-1.500 1.500-6-3-7C7 7 2 9 .5 13z" fill="#35c1c4"/><path d="M14 .6C20.500 1 24.500 6 24.500 11c0 4-3 6-6 6-2.500 0-4-1-4-2 1-1 1.300-2.500.7-4C19 9 18 4 14 .6z" fill="#69db76"/><path d="M8 9c-5 5-2 13 4 15.500C4 24-.5 17 .7 11 3 7 8 6.500 11.500 8z" fill="#2475cf"/><path d="M8.500 11c-1.500 6 3 10.500 12 8.500-3 4-7 5-9.500 4.800C5 21 4.500 14 8.500 11z" fill="#144f9c"/><path d="M14.500 15c-3.500-1-3-5-1.500-6 3 1.500 3 4.500 1.500 6z" fill="#1c1c1c"/><path d="M15 17c2 1.500 6 1 9-1.500-.5 2-1.500 3.300-3 4.300-3 0-5-.8-6-2.800z" fill="#1c1c1c"/></svg></button>
    <button class="run" aria-label="Chrome"><svg width="29" height="29" viewBox="0 0 29 29"><circle cx="12" cy="17" r="11.500" fill="#34a853"/><path d="M12 17 2 11.300A11.500 11.500 0 0 1 22 11.300H12z" fill="#ea4335"/><path d="M22 11.300A11.500 11.500 0 0 1 12 28.500l5-8.600-5-8.600z" fill="#fbc816"/><circle cx="12" cy="17" r="5.800" fill="#fff"/><circle cx="12" cy="17" r="4.500" fill="#3b82ee"/><circle cx="21" cy="8" r="7.500" fill="#f3f1f6"/><path d="M17.500 9h7v4h-7z" fill="#3f5aa0"/><path d="M19 4h4v5h-4z" fill="#d9685f"/><path d="M18 3h6v2h-6z" fill="#666"/></svg></button>
    <button class="run" aria-label="OBS"><svg width="28" height="29" viewBox="0 0 28 29"><circle cx="12" cy="17" r="10.500" fill="#222" stroke="#e5e5e5" stroke-width="1.400"/><path d="M8 9c-.5 4 1 6 4 8M19.500 14c-4-1.500-6.500 0-7.500 3M11 25c3.500-2 4-5 1-8" fill="none" stroke="#ddd" stroke-width="1.600"/><path d="M5 20c1.500 2.500 5 2 7-3M16 10c-3 1-4.500 4-4 7M18 22c.5-3-2-5-6-5" fill="none" stroke="#888"/><circle cx="21.500" cy="8" r="6" fill="#e30613"/></svg></button>
    <button class="run active" aria-label="Excel"><svg width="23" height="23"><use href="#xl"/></svg></button>
  </div>
  <div class="tray">
    <svg width="12" height="7" viewBox="0 0 12 7"><path d="m1 6 5-5 5 5" fill="none" stroke="#eee" stroke-width="1.400"/></svg>
    <svg width="18" height="16" viewBox="0 0 18 16"><path d="M5 13c-5 0-5-6-.5-6.500C6 2 12 2 13 7c5 0 5 6 1 6z" fill="#777"/><path d="m2 1 14 14" stroke="#ccc" stroke-width="1.200"/></svg>
    <svg width="12" height="16" viewBox="0 0 12 16"><rect x="3.600" y=".6" width="4.800" height="9.500" rx="2.400" fill="#3c7d6b" stroke="#6fd3b5" stroke-width="1.200"/><path d="M.8 7c0 7 10.400 7 10.400 0M6 12.500V16" fill="none" stroke="#dfeee9" stroke-width="1.100"/></svg>
    <svg class="w" width="14" height="12" viewBox="0 0 14 12"><path d="M1 4.500c3.500-4 8.500-4 12 0M3 7c2.500-2.700 5.500-2.700 8 0M5 9.300c1.300-1.300 2.700-1.300 4 0" fill="none" stroke="#eee" stroke-width="1.200"/><circle cx="7" cy="10.500" r="1.300" fill="#fff"/></svg>
    <svg width="17" height="14" viewBox="0 0 17 14"><path d="M1 5h2.500L7 1.500v11L3.500 9H1zM9.500 4.500c1.200 1.500 1.200 3.500 0 5M11.500 2.500c2.500 2.500 2.500 6.500 0 9M13.500 1c3.500 3.500 3.500 8.500 0 12" fill="none" stroke="#eee" stroke-width="1.100"/></svg>
    <svg width="17" height="14" viewBox="0 0 17 14"><path d="M7 3h6a1.500 1.500 0 0 1 1.500 1.500v6A1.500 1.500 0 0 1 13 12H4a1.500 1.500 0 0 1-1.500-1.500V8" fill="none" stroke="#eee" stroke-width="1.300"/><path d="M15.500 6v3M3.500 0v3M1 3h5v1.500c0 3-5 3-5 0z" stroke="#eee" stroke-width="1.200" fill="#eee"/></svg>
    <div class="clock"><span>10:34</span><span>4/11/2025</span></div>
    <svg width="15" height="16" viewBox="0 0 15 16"><path d="M8 2C4 1.500 2.500 4 2.500 7v3L1 12.500h12L11.500 10.500M5 13c.5 2.500 3.500 2.500 4 0" fill="none" stroke="#eee" stroke-width="1.200"/><path d="M10 1h4l-4 4.500h4M6 5h3L6 8.500h3" fill="none" stroke="#eee" stroke-width="1.200"/></svg>
  </div>
</footer>
</body>
</html>
```
FILE: styles.css
```css
* { box-sizing: border-box; }
body {
  margin: 0;
  min-height: 100vh;
  display: flex;
  flex-direction: column;
  background: #efefef;
  color: #222;
  font-family: "Open Sans", "Noto Sans", sans-serif;
  font-size: 12px;
}
button, input, select { font: inherit; color: inherit; }
button { border: 0; padding: 0; background: none; display: flex; align-items: center; justify-content: center; white-space: nowrap; flex: none; }
svg { flex: none; display: block; }
.defs { width: 0; height: 0; position: absolute; }
.chev { width: 8px; height: 8px; }
.chevl { width: 12px; height: 12px; }
.off { color: #a9a9a9; }

/* Title bar */
.titlebar { height: 48px; display: flex; align-items: center; padding-left: 16px; }
.logo { width: 16px; height: 16px; margin-right: 15px; }
.autosave { display: flex; align-items: center; justify-content: space-between; width: 116px; font-size: 10px; margin-right: 11px; white-space: nowrap; }
.switch { appearance: none; margin: 0; width: 43px; height: 20px; border: 1px solid #777; border-radius: 10px; background: #fff; display: flex; align-items: center; padding: 0 2px; }
.switch::before { content: ""; width: 15px; height: 15px; border-radius: 50%; background: #5c5c5c; }
.tb { height: 24px; }
.save { width: 18px; margin-right: 11px; }
.undo, .redo { width: 16px; }
.redo { margin-left: 6px; }
.arrow { width: 15px; }
.custom { width: 22px; margin: 0 9px 0 4px; }
.doc { flex: none; width: 275px; white-space: nowrap; color: #333; font-size: 11px; }
.search { flex: 1; max-width: 346px; height: 32px; display: flex; align-items: center; gap: 12px; padding: 0 13px; background: #fbfbfb; border: 1px solid #dedede; border-bottom-color: #bbb; border-radius: 4px; }
.search input { flex: 1; min-width: 0; border: 0; padding: 0; background: none; outline: 0; }
.search input::placeholder { color: #222; opacity: 1; }
.winbtns { margin-left: auto; display: flex; align-items: center; }
.winbtns button { width: 48px; height: 32px; }
.winbtns .avatar { width: 24px; height: 24px; margin-right: 12px; border-radius: 50%; background: #7f0a93; color: #fff; font-size: 11px; }

/* Ribbon tabs */
.tabs { height: 30px; display: flex; align-items: center; gap: 18px; padding: 1px 12px 0 9px; font-size: 13px; }
.tabs > button { height: 22px; border-bottom: 2px solid transparent; }
.tabs > .on { font-weight: 600; border-color: #1b7a3f; margin: 0 0 0 -5px; }
.share-area { margin-left: auto; display: flex; gap: 8px; font-size: 12px; }
.share-area button { height: 24px; border-radius: 4px; gap: 4px; font-size: 13px; }
.comments { width: 101px; background: #fff; border: 1px solid #bbb; }
.share { width: 97px; background: #1a8a43; color: #fff; }

/* Ribbon */
.ribbon { margin: 0 8px; height: 100px; background: #fff; border-radius: 8px; box-shadow: 0 0 2px #ccc; display: grid; grid-template-columns: 111px 161px 142px 106px 190px 115px 104px 115px 103px 60px 1fr; }
.group { display: flex; flex-direction: column; padding: 3px 0 0; position: relative; }
.group::after { content: ""; position: absolute; right: 0; top: 4px; bottom: 6px; width: 1px; background: #dcdcdc; }
.body { height: 78px; }
.lines { display: flex; flex-direction: column; padding-left: 6px; }
.line { height: 26px; display: flex; align-items: center; }
.ic { width: 26px; height: 24px; }
.ar { width: 12px; height: 24px; }
.ic.fill { width: 24px; }
.gap { margin-left: 5px; }
.gap2 { margin-left: 10px; }
.dark, .edit { color: #222; }
.sep { width: 1px; height: 22px; background: #dcdcdc; margin: 0 4px; flex: none; }
.sep.thin { margin: 0 1px; }
.label { display: flex; align-items: center; justify-content: center; height: 18px; font-size: 10px; padding: 0 18px 0 4px; position: relative; }
.group:nth-child(n+5) .label { padding: 0; }
.launch { width: 9px; height: 9px; position: absolute; right: 4px; top: 5px; }
.clip { display: flex; }
.clip .big { width: 63px; padding-top: 5px; }
.clip .lines { margin-left: -9px; padding-left: 0; }
.big { width: 100%; flex-direction: column; justify-content: flex-start; height: 78px; padding-top: 3px; font-size: 12px; }
.big span { line-height: 22px; }
.big.off, .txt { color: #b4b4b4; }
.bold { font-weight: 700; font-size: 14px; color: #888; }
.ital { font-style: italic; font-size: 14px; color: #888; }
.under { text-decoration: underline; font-size: 14px; color: #888; }
.sel { gap: 3px; padding-left: 2px; }
select { appearance: none; height: 24px; border: 1px solid #e4e4e4; border-radius: 3px; background: #efefef url("data:image/svg+xml,%3Csvg xmlns='http://www.w3.org/2000/svg' width='8' height='8'%3E%3Cpath d='M1.3 2.6 4 5.3 6.700 2.600' fill='none' stroke='%23a0a0a0'/%3E%3C/svg%3E") no-repeat right 1px center; padding: 0 2px; color: #bdbdbd; opacity: 1; }
.font { width: 100px; }
.size { width: 43px; }
.gen { width: 91px; }
.num .sel { padding-left: 1px; }
.wrap { flex-direction: column; font: 11px/10px "Liberation Sans", sans-serif; color: #888; }
.wrap span { display: flex; }
.pct { font-size: 18px; color: #888; margin-left: 3px; }
.th { font-size: 10px; color: #888; }
.dec { flex-direction: column; align-items: flex-end; padding-right: 4px; font: 9px/11px "Liberation Sans", sans-serif; color: #888; }
.txt { padding-left: 12px; }
.txt .line { justify-content: flex-start; gap: 4px; }
.txt .chev { margin-left: -3px; }
.txt .far { margin-left: 10px; }
.wide { width: 20px; margin-right: 4px; }
.wide2 { width: 9px; margin-right: 15px; }
.collapse { justify-self: end; align-self: end; width: 30px; height: 28px; }

/* Formula bar */
.fbar { display: flex; align-items: stretch; height: 22px; margin: 9px 8px 8px; font-family: "DejaVu Sans Mono", monospace; font-size: 12px; }
.box { display: flex; align-items: center; background: #fff; border-radius: 3px; box-shadow: 0 0 1px #bbb; }
.box input { border: 0; padding: 0; background: none; outline: 0; flex: 1; min-width: 0; }
.name { width: 100px; padding: 0 4px 0 5px; }
.dots { align-self: center; margin: 0 8px 0 10px; }
.fx { width: 85px; justify-content: space-between; padding: 0 1px 0 6px; margin-right: 6px; }
.func { font: italic 18px "Liberation Serif", serif; }
.formula { flex: 1; padding: 0 3px 0 9px; font-size: 13px; }

/* Grid */
.sheet { flex: 1; display: flex; position: relative; overflow: hidden; }
table { flex: 1; width: 0; height: 401px; min-height: 100%; table-layout: fixed; border-collapse: separate; border-spacing: 0; background: #fff; color: #1a1a1a; font-family: Inter, sans-serif; font-size: 17px; }
.col-rh { width: 36px; }
.col-a { width: 255px; }
.col-b { width: 181px; }
.col-c { width: 187px; }
.col-d { width: 243px; }
.col-e { width: 104px; }
.col-f { width: 123px; }
.col-g { width: 104px; }
th, td { padding: 1px 0 0; line-height: 20px; white-space: nowrap; overflow: hidden; text-align: center; border-right: 1px solid #e0e0e0; border-bottom: 1px solid #e0e0e0; }
th { font-weight: 400; background: #efefef; color: #444; }
thead th { height: 24px; font-size: 15px; border-bottom-color: #c8c8c8; }
tbody th { border-right-color: #c0c0c0; }
thead .cur { background: #dedede; color: #1f7a45; border-bottom: 2px solid #1f7a45; }
tbody .cur { background: #dedede; color: #1f7a45; border-right: 2px solid #1f7a45; }
.corner { background: linear-gradient(135deg, #efefef 50%, #d4d4d4 50%); }
.cut > * { height: 22px; padding: 0; }
.orange td:nth-child(-n+5), .purple td:nth-child(-n+5) { background: #e06836; color: #fff; font-weight: 600; border-right-color: #5a2a14; border-bottom-color: #b9542b; }
.purple td:nth-child(-n+5) { background: #6b209b; border-color: #3d1060; }
.data td:nth-child(-n+5) { border-color: #444; }
.data.last td:nth-child(-n+5) { border-bottom-color: #ccc; }
.left td { text-align: left; padding-left: 3px; }
.note { font-size: 16px; }
.tag { color: #fff; font-weight: 600; }
.case { background: #e06836; }
.task { background: #6b209b; }
b { font-weight: 700; }
.data .picked { background: #e8eef9; position: relative; overflow: visible; }
.marquee { position: absolute; left: -1px; top: -1px; width: calc(100% + 1px); height: calc(100% + 1px); overflow: visible; }
.h { position: absolute; width: 5px; height: 5px; background: #2450a4; border: 1px solid #fff; }
.tl { left: -3px; top: -3px; }
.tr { right: -3px; top: -3px; }
.bl { left: -3px; bottom: -3px; }
.br { right: -3px; bottom: -3px; }
.cursor { position: absolute; left: 93px; top: 3px; }
.data .editing { text-align: left; position: relative; overflow: visible; }
.data td.editing:nth-child(-n+5) { border-color: #1f6b3f; box-shadow: inset 0 1px #1f6b3f; }
.editing span { color: #2a4fb0; border-right: 1px solid #222; }
.knob { position: absolute; right: -2px; bottom: -2px; width: 4px; height: 4px; background: #1f7a45; }
.warn { background: linear-gradient(135deg, #1b8a2f 6px, transparent 6px); }
.vscroll { width: 20px; display: flex; flex-direction: column; align-items: center; padding: 4px 0 3px; background: #f1f1f1; }
.vscroll i { width: 8px; height: 39px; border-radius: 4px; background: #6b6b6b; margin: auto 0 10px; }
.snip { position: absolute; display: flex; background: #1f1f1f; color: #f0f0f0; }
.snip code { flex: 1; display: flex; align-items: center; justify-content: center; padding-top: 2px; background: #444; border-radius: 6px; font-family: "Liberation Mono", monospace; font-size: 26px; white-space: pre; }
.one { left: 943px; top: 167px; width: 223px; height: 47px; padding: 2px; }
.two { left: 940px; top: 325px; width: 229px; height: 54px; padding: 7px 4px 6px 6px; }

/* Sheet tabs */
.sheetbar { height: 32px; display: flex; align-items: flex-start; padding-left: 10px; }
.sheetbar button { width: 32px; height: 30px; }
.sheetbar .tab { width: 51px; height: 28px; margin-left: 37px; background: #fff; border-radius: 0 0 4px 4px; font-weight: 600; color: #333; }
.tab span { border-bottom: 2px solid #1b7a3f; line-height: 20px; }
.sheetbar .add { margin-left: 36px; }
.hscroll { margin-left: auto; width: 510px; height: 30px; display: flex; align-items: center; padding-right: 23px; }
.la { margin: 0 5px 0 19px; }
.track { flex: 1; }
.track i { display: block; width: 65%; height: 8px; border-radius: 4px; background: #6b6b6b; }

/* Status bar */
.status { height: 22px; display: flex; align-items: center; padding: 0 9px 0 11px; background: #f6f6f6; border-top: 1px solid #fff; font-size: 10px; color: #333; }
.mode { width: 65px; color: #777; }
.view { margin-left: auto; margin-right: 31px; gap: 2px; }
.v { width: 14px; margin-right: 26px; }
.zoom { display: flex; align-items: center; gap: 4px; color: #bbb; margin: 0 14px 0 -4px; }
.zoom input { appearance: none; width: 100px; height: 12px; margin: 0; background: linear-gradient(#222, #222) center / 100% 1px no-repeat; }
.zoom input::-webkit-slider-thumb { appearance: none; width: 1px; height: 6px; background: #222; }
.pctz { color: #bbb; }

/* Taskbar */
.taskbar { height: 48px; display: grid; grid-template-columns: 278px auto 1fr; align-items: center; background: #1c1c1c; color: #fff; }
.weather { justify-self: start; margin-left: 17px; width: 32px; height: 40px; padding-bottom: 10px; position: relative; }
.weather span { position: absolute; left: 13px; top: 3px; width: 16px; height: 16px; border-radius: 50%; background: #f08a9d; color: #3a0a14; font-size: 11px; line-height: 16px; }
.apps { display: flex; }
.apps button { width: 44px; height: 44px; position: relative; }
.run::after { content: ""; position: absolute; left: 19px; bottom: 3px; width: 6px; height: 3px; border-radius: 2px; background: #999; }
.active { background: #2b2b2b; border-radius: 4px; }
.active::after { left: 14px; width: 16px; background: #5fb8ea; }
.tray { display: flex; align-items: center; justify-content: flex-end; gap: 8px; padding-right: 20px; }
.tray > svg:first-child { margin-right: 9px; }
.tray > .w { margin-left: 10px; }
.tray > svg:nth-child(3) { margin-left: 9px; }
.clock { display: flex; flex-direction: column; align-items: flex-end; font-size: 11px; line-height: 16px; width: 64px; }
```
